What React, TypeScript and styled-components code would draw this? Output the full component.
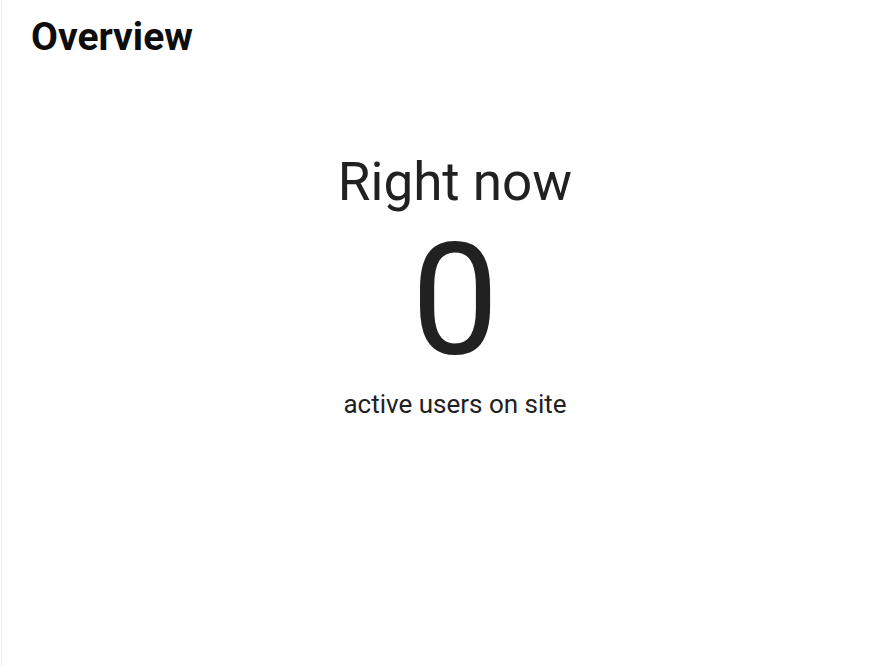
import styled, { createGlobalStyle } from "styled-components";

const GlobalStyle = createGlobalStyle`
  html, body {
    margin: 0;
    padding: 0;
    background: #fff;
  }
  body {
    font-family: Roboto, "Noto Sans", Arial, sans-serif;
    color: #212121;
  }
`;

const Panel = styled.div`
  box-sizing: border-box;
  width: 889px;
  height: 666px;
  margin-left: 1px;
  border-left: 1px solid #ececec;
  padding: 14px 11px 0 29px;
  display: flex;
  flex-direction: column;
`;

const Title = styled.h1`
  margin: 0;
  font-size: 39px;
  font-weight: 700;
  line-height: 1.2;
  color: #0d0d0d;
`;

const Stat = styled.div`
  display: flex;
  flex-direction: column;
  align-items: center;
  margin-top: 90px;
`;

const Label = styled.div<{ $size: number }>`
  font-size: ${(p) => p.$size}px;
  line-height: 1.2;
  color: #212121;
`;

const Count = styled.div`
  font-size: 156px;
  line-height: 1;
  margin: 8px 0 11px;
  color: #212121;
`;

export default function App() {
  return (
    <>
      <GlobalStyle />
      <Panel>
        <Title>Overview</Title>
        <Stat>
          <Label $size={53}>Right now</Label>
          <Count>0</Count>
          <Label $size={26}>active users on site</Label>
        </Stat>
      </Panel>
    </>
  );
}
